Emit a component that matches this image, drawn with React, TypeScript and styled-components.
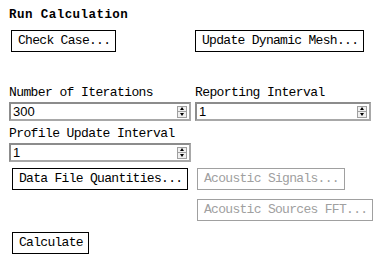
import styled, { createGlobalStyle } from "styled-components";

const Global = createGlobalStyle`
  html, body {
    margin: 0;
    background: #fff;
  }
  body {
    font-family: "Liberation Mono", "DejaVu Sans Mono", monospace;
    font-size: 13px;
    color: #000;
  }
`;

const Panel = styled.div`
  width: 386px;
  height: 259px;
  box-sizing: border-box;
  padding: 7px 0 0 9px;
  display: flex;
  flex-direction: column;
`;

const Title = styled.h1`
  margin: 0;
  font-size: 12.5px;
  font-weight: bold;
  letter-spacing: 0.45px;
  line-height: 16px;
  height: 16px;
`;

const Row = styled.div<{ $top: number }>`
  display: grid;
  grid-template-columns: 182px 177px;
  gap: 4px;
  margin-top: ${({ $top }) => $top}px;
  align-items: start;
`;

const Cell = styled.div<{ $shift?: number }>`
  display: flex;
  flex-direction: column;
  align-items: flex-start;
  gap: 9px;
  padding-left: ${({ $shift }) => $shift ?? 0}px;
`;

const Button = styled.button`
  height: 22px;
  box-sizing: border-box;
  padding: 0 5px 0 6px;
  border: 1px solid #000;
  background: #fff;
  color: #000;
  font-family: inherit;
  font-size: 13px;
  letter-spacing: -0.7px;
  line-height: 20px;
  text-align: left;
  white-space: nowrap;
  flex-shrink: 0;
  width: max-content;
  cursor: default;

  &:disabled {
    border-color: #a0a0a0;
    color: #a0a0a0;
  }
`;

const Label = styled.label`
  display: block;
  height: 16px;
  line-height: 16px;
  letter-spacing: -0.6px;
  white-space: nowrap;
  margin-bottom: 1px;
`;

const SpinBox = styled.div<{ $width: number }>`
  width: ${({ $width }) => $width}px;
  height: 19px;
  box-sizing: border-box;
  border: 2px solid #8c8c8c;
  border-right-color: #a8a8a8;
  border-bottom-color: #a8a8a8;
  display: flex;
  align-items: center;
  padding: 0 2px 0 2px;
  background: #fff;
`;

const Value = styled.input`
  flex: 1;
  min-width: 0;
  border: none;
  outline: none;
  padding: 0;
  font-family: "Liberation Sans", Arial, sans-serif;
  font-size: 13px;
  color: #000;
  background: transparent;
`;

const Spinner = styled.div`
  width: 10px;
  height: 12px;
  box-sizing: border-box;
  border: 1px solid #a0a0a0;
  background: #f0f0f0;
  display: flex;
  flex-direction: column;
`;

const Arrow = styled.div<{ $down?: boolean }>`
  flex: 1;
  display: flex;
  align-items: center;
  justify-content: center;
  border-top: ${({ $down }) => ($down ? "1px solid #a0a0a0" : "none")};

  &::before {
    content: "";
    border-left: 2px solid transparent;
    border-right: 2px solid transparent;
    ${({ $down }) => ($down ? "border-top: 3px solid #000;" : "border-bottom: 3px solid #000;")}
  }
`;

function NumberField({ label, value, width }: { label: string; value: string; width: number }) {
  return (
    <div>
      <Label>{label}</Label>
      <SpinBox $width={width}>
        <Value defaultValue={value} />
        <Spinner>
          <Arrow />
          <Arrow $down />
        </Spinner>
      </SpinBox>
    </div>
  );
}

export default function App() {
  return (
    <>
      <Global />
      <Panel>
        <Title>Run Calculation</Title>
        <Row $top={7}>
          <Cell $shift={2}>
            <Button>Check Case...</Button>
          </Cell>
          <Cell>
            <Button>Update Dynamic Mesh...</Button>
          </Cell>
        </Row>
        <Row $top={33}>
          <NumberField label="Number of Iterations" value="300" width={182} />
          <NumberField label="Reporting Interval" value="1" width={176} />
        </Row>
        <Row $top={5}>
          <NumberField label="Profile Update Interval" value="1" width={182} />
        </Row>
        <Row $top={6}>
          <Cell $shift={3}>
            <Button>Data File Quantities...</Button>
          </Cell>
          <Cell $shift={2}>
            <Button disabled>Acoustic Signals...</Button>
            <Button disabled>Acoustic Sources FFT...</Button>
          </Cell>
        </Row>
        <Row $top={11}>
          <Cell $shift={3}>
            <Button>Calculate</Button>
          </Cell>
        </Row>
      </Panel>
    </>
  );
}
